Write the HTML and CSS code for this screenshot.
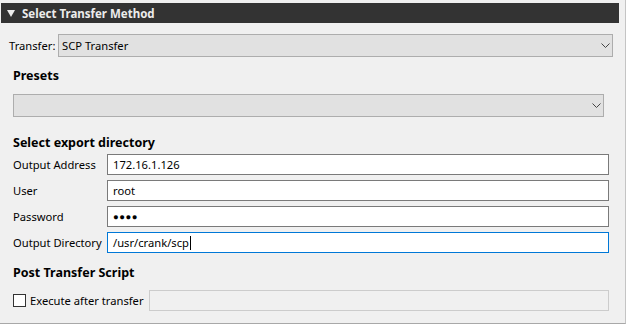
FILE: index.html
```html
<!DOCTYPE html>
<html>
<head>
<meta charset="utf-8">
<link rel="stylesheet" href="styles.css">
</head>
<body>
<div class="panel">
  <div class="header"><svg class="tri" width="8" height="7" viewBox="0 0 8 7"><polygon points="0,0 8,0 4,7" fill="#ececec"/></svg><span class="htitle">Select Transfer Method</span></div>
  <div class="transfer-row">
    <span class="lbl">Transfer:</span>
    <div class="combo combo-transfer"><span>SCP Transfer</span>
      <svg class="chev" width="9" height="5" viewBox="0 0 9 5"><path d="M0.5 0.5 L4.5 4.5 L8.5 0.5" fill="none" stroke="#444" stroke-width="1"/></svg>
    </div>
  </div>
  <div class="heading h-presets">Presets</div>
  <div class="combo combo-presets">
    <span></span>
    <svg class="chev" width="9" height="5" viewBox="0 0 9 5"><path d="M0.5 0.5 L4.5 4.5 L8.5 0.5" fill="none" stroke="#444" stroke-width="1"/></svg>
  </div>
  <div class="heading h-export">Select export directory</div>
  <div class="form">
    <div class="frow"><span class="flbl">Output Address</span><div class="field">172.16.1.126</div></div>
    <div class="frow"><span class="flbl">User</span><div class="field">root</div></div>
    <div class="frow"><span class="flbl">Password</span><div class="field pw">&#9679;&#9679;&#9679;&#9679;</div></div>
    <div class="frow"><span class="flbl">Output Directory</span><div class="field focus">/usr/crank/scp<span class="caret"></span></div></div>
  </div>
  <div class="heading h-post">Post Transfer Script</div>
  <div class="post-row">
    <span class="check"></span>
    <span class="clbl">Execute after transfer</span>
    <div class="field disabled"></div>
  </div>
</div>
</body>
</html>
```
FILE: styles.css
```css
html, body {
  margin: 0;
  padding: 0;
  background: #f0f0f0;
}
body {
  font-family: "Noto Sans", "Open Sans", sans-serif;
  font-size: 11.2px;
  color: #000;
}
.panel {
  width: 626px;
  height: 324px;
  box-sizing: border-box;
  border-right: 1px solid #c4c4c4;
  border-bottom: 1px solid #a8a8a8;
  display: flex;
  flex-direction: column;
  overflow: hidden;
}
.header {
  margin-top: 3px;
  margin-left: 1px;
  width: 618px;
  height: 20px;
  background: #333333;
  color: #ececec;
  display: flex;
  align-items: center;
  font-weight: bold;
  font-size: 11.5px;
}
.tri {
  display: block;
  margin-left: 6px;
  margin-right: 7px;
}
.transfer-row {
  margin-top: 11px;
  display: flex;
  align-items: center;
  padding-left: 9px;
}
.lbl {
  width: 49px;
}
.combo {
  box-sizing: border-box;
  height: 23px;
  background: #e1e1e1;
  border: 1px solid #adadad;
  display: flex;
  align-items: center;
  justify-content: space-between;
  padding-left: 3px;
  padding-right: 2px;
}
.combo-transfer {
  width: 555px;
}
.combo-presets {
  margin-left: 13px;
  margin-top: 10px;
  width: 591px;
}
.chev {
  display: block;
}
.heading {
  font-weight: bold;
  font-size: 12.5px;
  line-height: 16px;
  height: 16px;
  padding-left: 13px;
}
.h-presets { margin-top: 11px; }
.h-export { margin-top: 18px; }
.h-post { margin-top: 12px; }
.form {
  margin-top: 3px;
  display: flex;
  flex-direction: column;
  gap: 5px;
}
.frow {
  display: flex;
  align-items: center;
  padding-left: 13px;
}
.flbl {
  width: 94px;
}
.field {
  box-sizing: border-box;
  width: 502px;
  height: 21px;
  background: #fff;
  border: 1px solid #7a7a7a;
  padding-left: 5px;
  display: flex;
  align-items: center;
}
.field.pw {
  font-size: 9.5px;
  letter-spacing: 0.5px;
}
.field.focus {
  border-color: #0078d7;
}
.caret {
  display: inline-block;
  width: 1px;
  height: 14px;
  background: #000;
  margin-left: 1px;
}
.post-row {
  margin-top: 9px;
  display: flex;
  align-items: center;
  padding-left: 13px;
}
.check {
  box-sizing: border-box;
  width: 13px;
  height: 13px;
  border: 1px solid #333;
  background: #fff;
  margin-right: 4px;
}
.clbl {
  width: 119px;
}
.field.disabled {
  width: 460px;
  background: #f0f0f0;
  border-color: #cccccc;
}
```
